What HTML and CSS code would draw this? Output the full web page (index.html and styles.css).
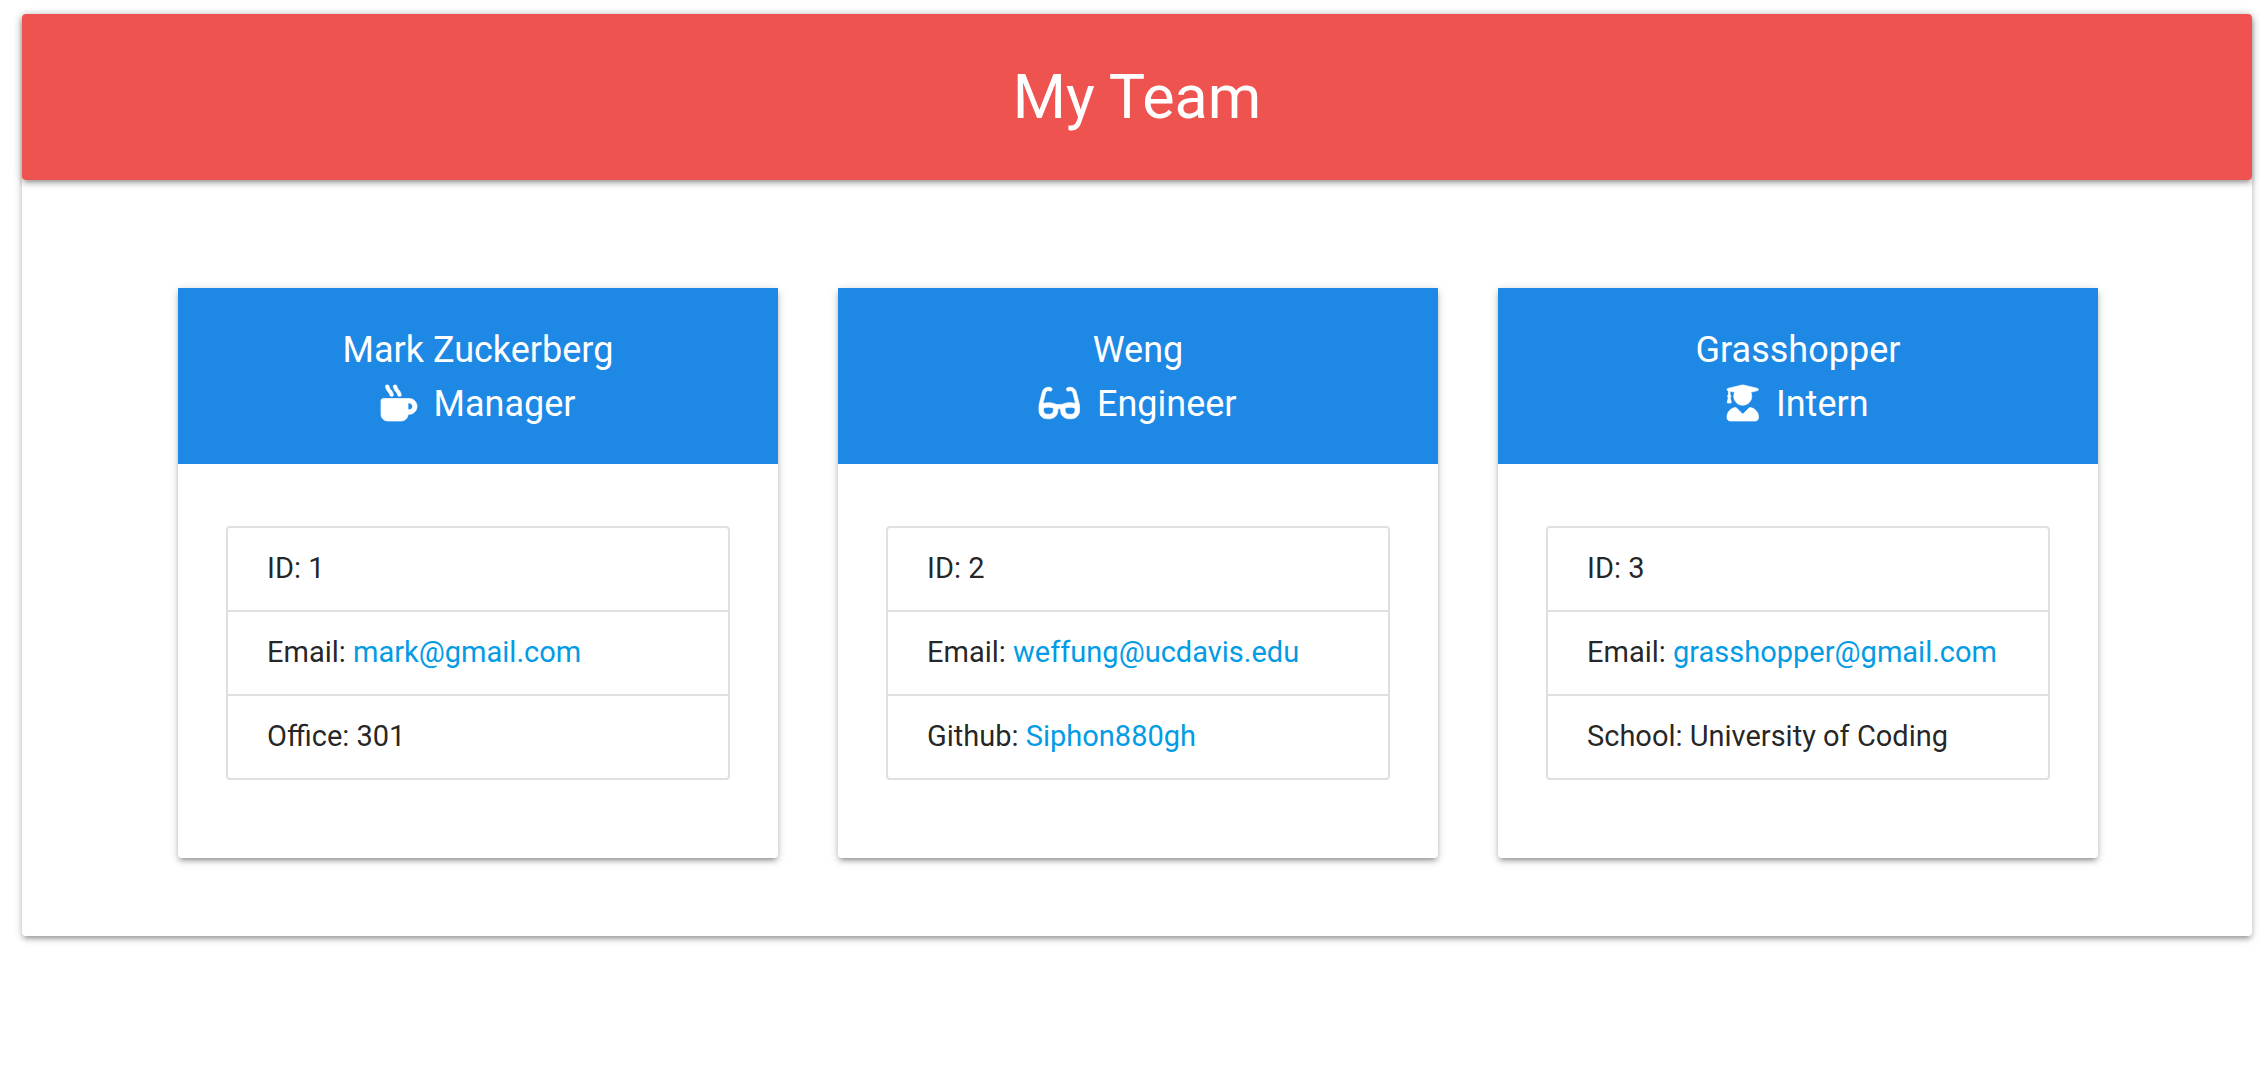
FILE: index.html
```html
<!DOCTYPE html>
<html lang="en">
<head>
  <meta charset="utf-8">
  <meta name="viewport" content="width=device-width, initial-scale=1">
  <title>My Team</title>
  <link rel="stylesheet" href="styles.css">
</head>
<body>
  <div class="page">
    <header class="banner">
      <h1 class="banner-title">My Team</h1>
    </header>
    <main class="team">
      <article class="card">
        <header class="card-header">
          <h2 class="card-name">Mark Zuckerberg</h2>
          <p class="card-role">
            <svg class="icon" viewBox="0 0 512 512" aria-hidden="true"><path d="M127.1 146.5c1.3 7.7 8 13.5 16 13.5h16.5c9.8 0 17.6-8.5 16.3-18-3.8-28.2-16.4-54.2-36.6-74.7-14.4-14.7-23.6-33.3-26.4-53.5C111.8 5.9 105 0 96.8 0H80.4C70.6 0 63 8.5 64.1 18c3.9 31.9 18 61.3 40.6 84.4 12 12.2 19.7 27.5 22.4 44.1zm112 0c1.3 7.7 8 13.5 16 13.5h16.5c9.8 0 17.6-8.5 16.3-18-3.8-28.2-16.4-54.2-36.6-74.7-14.4-14.7-23.6-33.3-26.4-53.5C223.800 5.900 217 0 208.800 0h-16.400c-9.800 0-17.500 8.500-16.300 18 3.900 31.900 18 61.300 40.600 84.400 12 12.200 19.700 27.500 22.400 44.100zM400 192H32c-17.700 0-32 14.300-32 32v192c0 53 43 96 96 96h192c53 0 96-43 96-96h16c61.800 0 112-50.200 112-112s-50.200-112-112-112zm0 160h-16v-96h16c26.500 0 48 21.500 48 48s-21.500 48-48 48z"/></svg>
            <span>Manager</span>
          </p>
        </header>
        <div class="card-body">
          <ul class="details">
            <li class="detail">ID: 1</li>
            <li class="detail">Email: <a class="link" href="mailto:mark@gmail.com">mark@gmail.com</a></li>
            <li class="detail">Office: 301</li>
          </ul>
        </div>
      </article>

      <article class="card">
        <header class="card-header">
          <h2 class="card-name">Weng</h2>
          <p class="card-role">
            <svg class="icon" viewBox="0 0 576 512" aria-hidden="true"><path d="M574.1 280.37L528.75 98.66c-5.91-23.7-21.59-44.05-43-55.81-21.44-11.73-46.97-14.11-70.19-6.33l-15.25 5.08c-8.39 2.79-12.92 11.86-10.12 20.24l5.06 15.18c2.79 8.38 11.85 12.91 20.23 10.12l13.18-4.39c10.87-3.62 23-3.57 33.16 1.73 10.29 5.37 17.57 14.56 20.37 25.82l38.46 153.82c-22.19-6.81-49.79-12.46-81.2-12.46-34.77 0-73.98 7.02-114.85 26.74h-73.18c-40.87-19.74-80.08-26.75-114.86-26.75-31.42 0-59.02 5.65-81.21 12.46l38.46-153.83c2.79-11.25 10.09-20.45 20.38-25.81 10.16-5.3 22.28-5.35 33.15-1.73l13.17 4.39c8.38 2.79 17.44-1.74 20.23-10.12l5.06-15.18c2.8-8.38-1.73-17.45-10.12-20.24l-15.25-5.08c-23.22-7.78-48.75-5.41-70.19 6.33-21.41 11.77-37.09 32.11-43 55.8L1.9 280.37A64.218 64.218 0 0 0 0 295.86v70.25C0 429.01 51.58 480 115.2 480h37.12c60.28 0 110.37-45.94 114.88-105.37l2.93-38.63h35.75l2.93 38.63C313.31 434.06 363.4 480 423.68 480h37.12c63.62 0 115.2-50.99 115.2-113.88v-70.25c0-5.23-.64-10.43-1.9-15.5zm-370.72 89.42c-1.97 25.91-24.4 46.21-51.06 46.21H115.2C86.97 416 64 393.62 64 366.11v-37.54c18.12-6.49 43.42-12.92 72.58-12.92 23.86 0 47.26 4.33 69.93 12.92l-3.13 41.22zM512 366.12c0 27.51-22.97 49.88-51.2 49.88h-37.12c-26.67 0-49.1-20.3-51.06-46.21l-3.13-41.22c22.67-8.59 46.08-12.92 69.95-12.92 29.12 0 54.43 6.44 72.55 12.93v37.54z"/></svg>
            <span>Engineer</span>
          </p>
        </header>
        <div class="card-body">
          <ul class="details">
            <li class="detail">ID: 2</li>
            <li class="detail">Email: <a class="link" href="mailto:weffung@ucdavis.edu">weffung@ucdavis.edu</a></li>
            <li class="detail">Github: <a class="link" href="https://github.com/Siphon880gh">Siphon880gh</a></li>
          </ul>
        </div>
      </article>

      <article class="card">
        <header class="card-header">
          <h2 class="card-name">Grasshopper</h2>
          <p class="card-role">
            <svg class="icon" viewBox="0 0 448 512" aria-hidden="true"><path d="M319.4 320.6L224 416l-95.4-95.4C57.1 323.7 0 382.2 0 454.4v9.6c0 26.5 21.5 48 48 48h352c26.5 0 48-21.5 48-48v-9.6c0-72.2-57.1-130.7-128.6-133.8zM13.6 79.8l6.4 1.5v58.4c-7 4.2-12 11.5-12 20.3 0 8.4 4.6 15.4 11.1 19.7L3.5 242c-1.7 6.9 2.1 14 7.6 14h41.8c5.5 0 9.3-7.1 7.6-14l-15.6-62.3C51.4 175.4 56 168.4 56 160c0-8.8-5-16.1-12-20.3V87.1l66 15.9c-8.6 17.2-14 36.4-14 57 0 70.7 57.3 128 128 128s128-57.3 128-128c0-20.6-5.3-39.8-14-57l96.3-23.2c18.2-4.4 18.2-27.1 0-31.5l-190.4-46c-13-3.1-26.7-3.1-39.7 0L13.6 48.2c-18.1 4.4-18.1 27.2 0 31.6z"/></svg>
            <span>Intern</span>
          </p>
        </header>
        <div class="card-body">
          <ul class="details">
            <li class="detail">ID: 3</li>
            <li class="detail">Email: <a class="link" href="mailto:grasshopper@gmail.com">grasshopper@gmail.com</a></li>
            <li class="detail">School: University of Coding</li>
          </ul>
        </div>
      </article>
    </main>
  </div>
</body>
</html>
```

FILE: styles.css
```css
*,
*::before,
*::after {
  box-sizing: border-box;
}

:root {
  --shadow: 0 4px 4px 0 rgba(0, 0, 0, 0.14),
    0 6px 2px -4px rgba(0, 0, 0, 0.12),
    0 2px 10px 0 rgba(0, 0, 0, 0.2);
}

body {
  margin: 0;
  padding: 14px 14px 14px 22px;
  background: #fff;
  color: rgba(0, 0, 0, 0.87);
  font-family: Roboto, "Liberation Sans", sans-serif;
  font-size: 29px;
  line-height: 42px;
}

.page {
  border-radius: 4px;
  background: #fff;
  box-shadow: var(--shadow);
}

.banner {
  padding: 48px;
  border-radius: 4px;
  background: #ef5350;
  box-shadow: var(--shadow);
  color: #fff;
  text-align: center;
}

.banner-title {
  margin: 0;
  font-size: 61px;
  font-weight: 450;
  line-height: 70px;
}

.team {
  display: grid;
  grid-template-columns: repeat(auto-fit, minmax(min(100%, 520px), 1fr));
  gap: 60px;
  padding: 108px 154px 78px 156px;
}

.card {
  border-radius: 4px;
  background: #fff;
  box-shadow: var(--shadow);
}

.card-header {
  padding: 35px 48px 33px;
  background: #1e88e5;
  color: #fff;
  text-align: center;
}

.card-name,
.card-role {
  margin: 0;
  font-size: 36px;
  font-weight: 450;
  line-height: 54px;
}

.card-role {
  display: flex;
  justify-content: center;
  align-items: center;
  gap: 17px;
}

.icon {
  height: 36px;
  margin-bottom: 3px;
  overflow: visible;
  fill: currentColor;
  stroke: currentColor;
  stroke-width: 10;
}

.card-body {
  padding: 62px 48px 78px;
}

.details {
  margin: 0;
  padding: 0;
  border: 2px solid #e0e0e0;
  border-radius: 4px;
  list-style: none;
}

.detail {
  padding: 19px 39px 21px;
}

.detail + .detail {
  border-top: 2px solid #e0e0e0;
}

.link {
  color: #039be5;
  text-decoration: none;
}
```
